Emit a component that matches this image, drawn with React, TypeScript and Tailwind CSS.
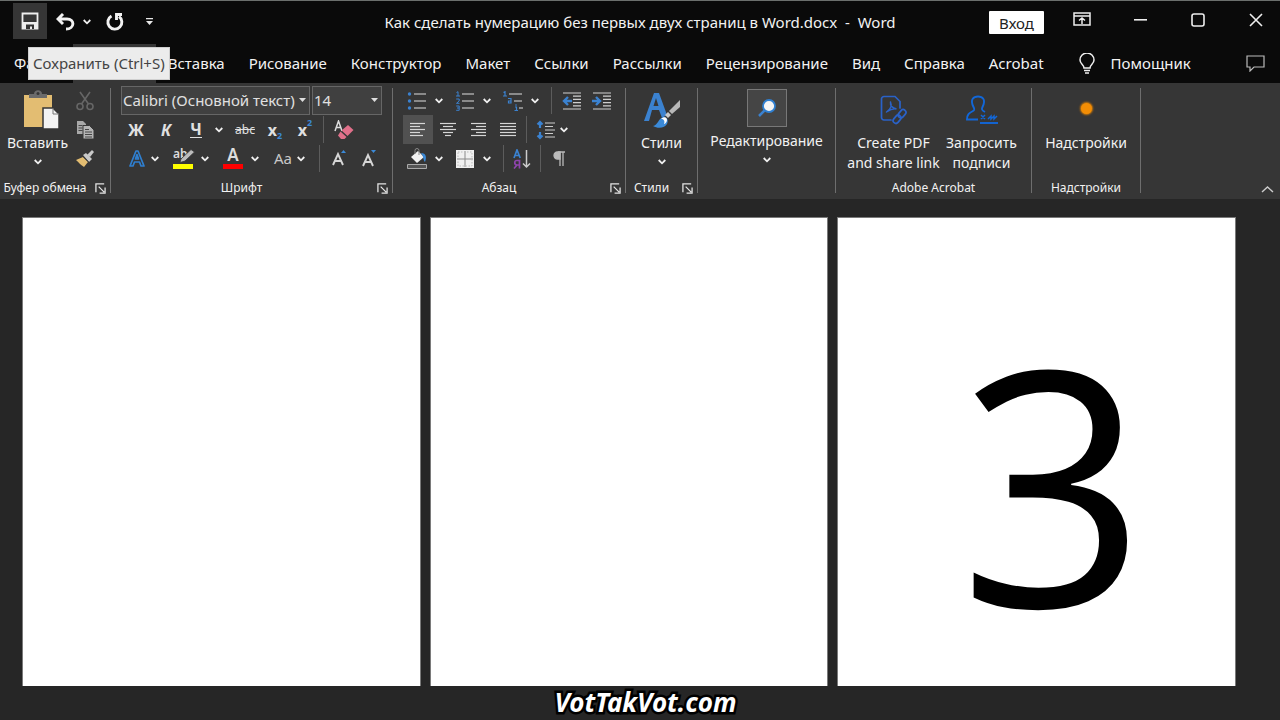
import { useState } from "react";
import type { ReactNode } from "react";

const TABS = [
  "Главная", "Вставка", "Рисование", "Конструктор", "Макет", "Ссылки",
  "Рассылки", "Рецензирование", "Вид", "Справка", "Acrobat",
];
const FONTS = ["Calibri (Основной текст)", "Arial", "Times New Roman"];
const SIZES = ["12", "14", "16", "18"];

// ── small pieces ──
function Chevron() {
  return (
    <svg width="8" height="6" viewBox="0 0 8 6" className="shrink-0" fill="none" stroke="#f0f0f0" strokeWidth="1.8">
      <path d="M.7 1 4 4.3 7.3 1" />
    </svg>
  );
}

function Divider() {
  return <div className="mt-[5px] mb-[6px] w-px shrink-0 bg-[#6e6e6e]" />;
}

function Sep() {
  return <div className="h-[27px] w-px shrink-0 bg-[#5c5c5c]" />;
}

function Tool({ label, children, className = "w-5" }: { label: string; children: ReactNode; className?: string }) {
  return (
    <button type="button" aria-label={label} className={`flex h-[29px] shrink-0 items-center justify-center ${className}`}>
      {children}
    </button>
  );
}

function Split({ label, children, tight = false }: { label: string; children: ReactNode; tight?: boolean }) {
  return (
    <button type="button" aria-label={label} className={`flex h-[29px] shrink-0 items-center ${tight ? "gap-1" : "gap-2"}`}>
      <span className="flex w-5 justify-center">{children}</span>
      <Chevron />
    </button>
  );
}

function Group({ title, launcher = false, className, children }: { title: string; launcher?: boolean; className: string; children: ReactNode }) {
  return (
    <section aria-label={title || "Редактирование"} className={`flex shrink-0 flex-col justify-between ${className}`}>
      {children}
      <div className="flex h-[22px] items-center text-[12px]">
        <span className="flex-1 text-center whitespace-nowrap">{title}</span>
        {launcher && (
          <button type="button" aria-label={`Параметры: ${title}`} className="flex w-5 justify-center">
            <svg width="11" height="11" viewBox="0 0 12 12" fill="none" stroke="#e4e4e4" strokeWidth="1.4">
              <path d="M1 10V1h9M4 4l6 6M11 5v6H5" />
            </svg>
          </button>
        )}
      </div>
    </section>
  );
}

function BigButton({ icon, lines, menu = false, className }: { icon: ReactNode; lines: string[]; menu?: boolean; className: string }) {
  return (
    <button type="button" className={`flex shrink-0 flex-col items-center text-[14px] leading-5 whitespace-nowrap ${className}`}>
      <span className="flex h-[46px] items-center">{icon}</span>
      {lines.map(l => <span key={l}>{l}</span>)}
      {menu && <span className="flex h-[18px] items-center"><Chevron /></span>}
    </button>
  );
}

function Lines({ rows }: { rows: [number, number][] }) {
  return (
    <svg width="18" height="16" viewBox="0 0 18 16" stroke="#d6d6d6" strokeWidth="1.2">
      {rows.map(([a, b], i) => <path key={i} d={`M${a} ${1.5 + i * 3}H${b}`} />)}
    </svg>
  );
}

function IndentIcon({ arrow }: { arrow: string }) {
  return (
    <svg width="20" height="18" viewBox="0 0 20 18" fill="none">
      <path d="M1 1h18M11 4.200h8M11 7.400h8M11 10.600h8M11 13.800h8M1 17h18" stroke="#cfcfcf" strokeWidth="1.2" />
      <path d={arrow} stroke="#3b82d0" strokeWidth="2.4" />
    </svg>
  );
}

// ── ribbon groups ──
function Clipboard() {
  return (
    <Group title="Буфер обмена" launcher className="w-[110px]">
      <div className="flex">
        <BigButton
          className="w-[75px] pt-1"
          lines={["Вставить"]}
          menu
          icon={
            <svg width="42" height="40" viewBox="-6 0 42 40">
              <path d="M1 5h28v32H1z" fill="#e3bd72" />
              <path d="M6 8V4h5c0-5 8-5 8 0h5v4z" fill="#6b6b6b" />
              <circle cx="15" cy="3.500" r="1.500" fill="#363636" />
              <path d="M20 18h10l6 6v15H20z" fill="#f3f3f3" stroke="#363636" strokeWidth="1.500" />
              <path d="M30 18v6h6" fill="none" stroke="#777" />
            </svg>
          }
        />
        <div className="flex flex-col pt-[3px]">
          <Tool label="Вырезать">
            <svg width="18" height="20" viewBox="0 0 18 20" fill="none" stroke="#666" strokeWidth="1.600">
              <path d="M4 1l8.500 12M14 1 5.500 13" />
              <circle cx="4" cy="15.500" r="3" /><circle cx="14" cy="15.500" r="3" />
            </svg>
          </Tool>
          <Tool label="Копировать">
            <svg width="18" height="18" viewBox="0 0 18 18">
              <path d="M1 0h6l3 3v10H1z" fill="#a8a8a8" />
              <path d="M2.500 4.500h4M2.500 7h4M2.500 9.500h4" stroke="#454545" />
              <path d="M7 4.500h6.500L18 9v9H7z" fill="#b4b4b4" stroke="#363636" />
              <path d="M9 8.500h4M9 11h7M9 13.500h7M9 16h7" stroke="#454545" />
            </svg>
          </Tool>
          <Tool label="Формат по образцу">
            <svg width="18" height="18" viewBox="0 0 18 18">
              <path d="M0 10l7-3 5 5-4 5C5 15 3 13 0 10z" fill="#e3bd72" />
              <path d="M7 5l3-2 6 6-3 3z" fill="#c9c9c9" />
              <path d="M11 5l5-5 2 2-4 5z" fill="#c9c9c9" />
              <path d="M6.500 6l6 6" stroke="#363636" />
            </svg>
          </Tool>
        </div>
      </div>
    </Group>
  );
}

function Combo({ label, options, value, className }: { label: string; options: string[]; value: string; className: string }) {
  const [val, setVal] = useState(value);
  return (
    <div className={`relative h-[29px] ${className}`}>
      <select
        aria-label={label}
        value={val}
        onChange={e => setVal(e.target.value)}
        className="h-full w-full appearance-none border border-[#666] bg-[#404040] pl-px text-[15px] outline-none"
      >
        {options.map(o => <option key={o}>{o}</option>)}
      </select>
      <svg width="7" height="4" viewBox="0 0 7 4" className="pointer-events-none absolute top-3 right-1">
        <path d="M0 0h7L3.500 4z" fill="#ddd" />
      </svg>
    </div>
  );
}

function FontGroup() {
  return (
    <Group title="Шрифт" launcher className="w-[281px]">
      <div className="flex flex-col pt-[3px] pl-[10px] text-[#e0e0e0]">
        <div className="flex gap-[2px]">
          <Combo label="Шрифт" options={FONTS} value={FONTS[0]} className="w-[189px]" />
          <Combo label="Размер шрифта" options={SIZES} value="14" className="w-[70px]" />
        </div>
        <div className="flex items-center">
          <Tool label="Полужирный" className="w-[30px] text-[16px] font-bold">Ж</Tool>
          <Tool label="Курсив" className="w-[30px] text-[16px] font-bold italic">К</Tool>
          <Tool label="Подчёркнутый" className="w-[30px] text-[16px] leading-4 font-bold"><span className="border-b border-[#e0e0e0]">Ч</span></Tool>
          <Tool label="Вид подчёркивания" className="w-4"><Chevron /></Tool>
          <Tool label="Зачёркнутый" className="w-9 text-[12px] line-through">abc</Tool>
          <Tool label="Подстрочный" className="w-6 text-[16px] font-bold">
            x<sub className="pt-2 text-[9px] text-[#3b8ad8]">2</sub>
          </Tool>
          <Tool label="Надстрочный" className="w-9 text-[16px] font-bold">
            x<sup className="pb-1 text-[9px] text-[#3b8ad8]">2</sup>
          </Tool>
          <Sep />
          <Tool label="Очистить формат" className="w-10">
            <svg width="20" height="20" viewBox="0 0 20 20" fill="none">
              <path d="M1 11 4.500 1 8 11M2.500 7.500h4" stroke="#ddd" strokeWidth="1.500" />
              <path d="M14 5l5.500 5-6 6-6-5.500z" fill="#e0708a" />
              <path d="M6.500 11.500l6 5.500-2 2H7l-3-3.500z" fill="#e0708a" />
            </svg>
          </Tool>
        </div>
        <div className="flex items-center gap-[14px] pl-[6px]">
          <Split label="Текстовые эффекты" tight>
            <svg width="18" height="19" viewBox="0 0 18 19" fill="none" strokeLinejoin="round">
              <path d="M2 17 8 2h2l6 15h-3l-1.500-4h-5L5 17zM7.500 10h3L9 5.500z" stroke="#2f7fd0" strokeWidth="1.700" />
            </svg>
          </Split>
          <Split label="Цвет выделения">
            <svg width="20" height="22" viewBox="0 0 20 22" className="overflow-visible">
              <text x="0" y="10" fontSize="12" fontWeight="600" fill="#ddd">ab</text>
              <path d="M8 11 18 1.500l3.500 2.500L12 13l-5 1.500z" fill="#bdbdbd" stroke="#363636" strokeWidth=".8" />
              <path d="M0 16h20v5H0z" fill="#ffff00" />
            </svg>
          </Split>
          <Split label="Цвет текста">
            <svg width="20" height="22" viewBox="0 0 20 22" className="overflow-visible">
              <text x="10" y="13" fontSize="17" fontWeight="600" textAnchor="middle" fill="#ddd">A</text>
              <path d="M0 16h20v5H0z" fill="#f00" />
            </svg>
          </Split>
          <Split label="Регистр" tight><span className="text-[15px] text-[#c8c8c8]">Aa</span></Split>
          <div className="flex items-center gap-[10px]">
            <Sep />
            <Tool label="Увеличить размер">
              <svg width="18" height="20" viewBox="0 0 18 20" fill="none">
                <path d="M2 16 7 5l5 11M4 12h6" stroke="#d6d6d6" strokeWidth="1.900" />
                <path d="M10 4l2.500-3L15 4z" fill="#3b8ad8" />
              </svg>
            </Tool>
            <Tool label="Уменьшить размер">
              <svg width="18" height="20" viewBox="0 0 18 20" fill="none">
                <path d="M2 17 7 6l5 11M4 13h6" stroke="#d6d6d6" strokeWidth="1.900" />
                <path d="M10 1l2.500 3L15 1z" fill="#3b8ad8" />
              </svg>
            </Tool>
          </div>
        </div>
      </div>
    </Group>
  );
}

function ParagraphGroup() {
  const [align, setAlign] = useState(0);
  const aligns: { label: string; rows: [number, number][] }[] = [
    { label: "По левому краю", rows: [[1, 16], [1, 11], [1, 16], [1, 11], [1, 14]] },
    { label: "По центру", rows: [[1, 17], [4, 14], [1, 17], [4, 14], [6, 12]] },
    { label: "По правому краю", rows: [[2, 17], [7, 17], [2, 17], [7, 17], [2, 17]] },
    { label: "По ширине", rows: [[1, 17], [1, 17], [1, 17], [1, 17], [1, 17]] },
  ];
  return (
    <Group title="Абзац" launcher className="w-[232px]">
      <div className="flex flex-col pt-[3px] pl-[10px]">
        <div className="flex items-center gap-3 pl-1">
          <Split label="Маркеры">
            <svg width="20" height="18" viewBox="0 0 20 18">
              <path d="M7 2h12M7 9h12M7 16h12" stroke="#ddd" strokeWidth="1.200" />
              <g fill="#3b82d0"><circle cx="2.500" cy="2" r="1.700" /><circle cx="2.500" cy="9" r="1.700" /><circle cx="2.500" cy="16" r="1.700" /></g>
            </svg>
          </Split>
          <Split label="Нумерация">
            <svg width="20" height="20" viewBox="0 0 20 20" fill="none">
              <path d="M7 3h12M7 10h12M7 17h12" stroke="#ddd" strokeWidth="1.200" />
              <path d="M1.500 1.500 3 .7v4.300M1 5h4M1.200 8h3v2L1.500 12.300h3M1.200 15h3v4.300h-3M2 17h2" stroke="#3b82d0" />
            </svg>
          </Split>
          <Split label="Многоуровневый список">
            <svg width="20" height="20" viewBox="0 0 20 20" fill="none">
              <path d="M6 3h13M11 10h8M16 17h4" stroke="#ddd" strokeWidth="1.200" />
              <path d="M.5 1.500 2 .7v4.300M0 5h4M5 7.500h3v4.500H5.500V10H8M12 16h1.500v3.500M11.500 19.500h3.500M13 13.300v1.400" stroke="#3b82d0" strokeWidth="1.200" />
            </svg>
          </Split>
          <div className="flex items-center gap-[10px]">
            <Sep />
            <Tool label="Уменьшить отступ"><IndentIcon arrow="M10 9H2M6 5 2 9l4 4" /></Tool>
            <Tool label="Увеличить отступ"><IndentIcon arrow="M0 9h8M4 5l4 4-4 4" /></Tool>
          </div>
        </div>
        <div className="flex items-center">
          {aligns.map((a, i) => (
            <button
              key={a.label}
              type="button"
              aria-label={a.label}
              aria-pressed={i === align}
              onClick={() => setAlign(i)}
              className={`flex h-[29px] w-[30px] items-center justify-center ${i === align ? "bg-[#515151]" : ""}`}
            >
              <Lines rows={a.rows} />
            </button>
          ))}
          <div className="flex items-center gap-[9px] pl-[3px]">
            <Sep />
            <Split label="Интервал" tight>
              <svg width="20" height="20" viewBox="0 0 20 20" fill="none">
                <path d="M4 2v6M1.500 4.500 4 2l2.500 2.500M4 18v-6M1.500 15.500 4 18l2.500-2.500" stroke="#3b82d0" strokeWidth="2.200" />
                <path d="M9 3h10M9 6.500h8M9 10h10M9 13.500h8M9 17h10" stroke="#ccc" strokeWidth="1.200" />
              </svg>
            </Split>
          </div>
        </div>
        <div className="flex items-center gap-3 pl-1">
          <Split label="Заливка">
            <svg width="20" height="22" viewBox="0 0 20 22">
              <path d="M4 9 11 3l6 6-7 6z" fill="#f2f2f2" />
              <path d="M8 6V2.500a2 2 0 0 1 4 0V7" fill="none" stroke="#888" />
              <path d="M14 5c5 0 6 4 4 9-2-2-1-5-4-9z" fill="#3b8ad8" />
              <path d="M.5 16.500h19v4H.5z" fill="#555" stroke="#aaa" />
            </svg>
          </Split>
          <Split label="Границы">
            <svg width="18" height="18" viewBox="0 0 18 18">
              <path d="M0 0h18v18H0z" fill="#f0f0f0" />
              <path d="M9 1v16M1 9h16" stroke="#8a8a8a" />
              <path d="M2 2h14v14H2z" fill="none" stroke="#bbb" strokeDasharray="1.500 1.500" />
            </svg>
          </Split>
          <div className="flex items-center gap-2">
            <Sep />
            <Tool label="Сортировка">
              <svg width="18" height="20" viewBox="0 0 18 20" fill="none" strokeWidth="1.700">
                <path d="M1 9 4 1l3.200 8M2 6.500h4" stroke="#3b82d0" />
                <path d="M6.500 19.500v-8H4c-3 0-3 4.500 0 4.500h2.500M4 16l-3 3.500" stroke="#8e44ad" />
                <path d="M13.500 1v17M10 14.500l3.500 3.500 3.500-3.500" stroke="#ccc" strokeWidth="1.500" />
              </svg>
            </Tool>
            <Sep />
            <Tool label="Отобразить все знаки">
              <svg width="12" height="16" viewBox="0 0 12 16" fill="none" stroke="#bbb" strokeWidth="1.300">
                <path d="M12 1H5M7 1v14M10 1v14" /><path d="M7 1H4.500a3.500 3.500 0 0 0 0 7H7z" fill="#bbb" />
              </svg>
            </Tool>
          </div>
        </div>
      </div>
    </Group>
  );
}

function Ribbon() {
  return (
    <div className="flex h-[116px] shrink-0 bg-[#363636] text-[#f2f2f2]">
      <Clipboard />
      <Divider />
      <FontGroup />
      <Divider />
      <ParagraphGroup />
      <Divider />
      <Group title="Стили" launcher className="w-[71px]">
        <BigButton
          className="pt-1"
          lines={["Стили"]}
          menu
          icon={
            <svg width="38" height="38" viewBox="0 0 38 38">
              <path d="M1 30 11 2h5l8 22-5 3-3-8H9L6 30zM10.500 15h5L13 7z" fill="#3b82d0" />
              <path d="M37 9v7l-8 7-3-3z" fill="#b8b8b8" />
              <path d="M25 21l3 3-3 3-3-3z" fill="#c8c8c8" />
              <path d="M10 35c5-1 5-7 10-9 4 0 6 3 4 7-2 4-9 5-14 2z" fill="#3b8ad8" />
              <path d="M18 28c3-3 6-2 6 1 0 2-2 4-3 4 1-3 0-5-3-5z" fill="#fff" />
            </svg>
          }
        />
      </Group>
      <Divider />
      <Group title="" className="w-[137px]">
        <BigButton
          className="pt-0.5"
          lines={["Редактирование"]}
          menu
          icon={
            <span className="flex h-[38px] w-10 items-center justify-center border border-[#787878] bg-[#454545]">
              <svg width="20" height="20" viewBox="0 0 20 20">
                <path d="M2 18l7-7" stroke="#3b82d0" strokeWidth="2.500" />
                <circle cx="12" cy="8" r="6" fill="#f4f4f4" stroke="#2f7fd0" strokeWidth="1.800" />
              </svg>
            </span>
          }
        />
      </Group>
      <Divider />
      <Group title="Adobe Acrobat" className="w-[195px]">
        <div className="flex justify-center">
          <BigButton
            className="w-[96px] pt-1"
            lines={["Create PDF", "and share link"]}
            icon={
              <svg width="28" height="30" viewBox="0 0 28 30" fill="none" stroke="#2a62c8" strokeWidth="1.700" strokeLinecap="round">
                <path d="M11 25H4a2.500 2.500 0 0 1-2.500-2.500V4A2.500 2.500 0 0 1 4 1.500h11l5 5V13" />
                <path d="M10.500 7c2 4-1 8-4 10M10.500 7c-.5 4 2 6 6 7-4-1-7 1-10 3" strokeWidth="1.500" />
                <rect x="17.500" y="16" width="9" height="5.500" rx="2.700" transform="rotate(-50 22 18.700)" />
                <rect x="12.500" y="21.500" width="9" height="5.500" rx="2.700" transform="rotate(-50 17 24.200)" />
              </svg>
            }
          />
          <BigButton
            className="w-[80px] pt-1"
            lines={["Запросить", "подписи"]}
            icon={
              <svg width="34" height="30" viewBox="0 0 34 30" fill="none" stroke="#1267d8" strokeWidth="1.900">
                <path d="M13 24.500H2c0-5 2-6.500 6-8.500 2-1 1.500-2 .5-4-4-8 .5-10.500 4.500-10.500S21.500 4 17.500 12c-1 2-1 3 2.500 5" />
                <path d="M16 20l4 4M20 20l-4 4M23 24l3-3v3l3-3v3l3-3" strokeWidth="1.500" />
                <path d="M15 28h18" />
              </svg>
            }
          />
        </div>
      </Group>
      <Divider />
      <Group title="Надстройки" className="w-[108px]">
        <BigButton
          className="pt-1"
          lines={["Надстройки"]}
          icon={<span className="mb-1 h-[11px] w-[11px] rounded-full bg-[#f28d05] shadow-[0_0_2px_1px_#d07a08]" />}
        />
      </Group>
      <Divider />
      <button type="button" aria-label="Свернуть ленту" className="mt-auto mr-1.5 mb-1.5 ml-auto">
        <svg width="13" height="7" viewBox="0 0 13 7" fill="none" stroke="#ccc" strokeWidth="1.400"><path d="M1 6l5.500-5L12 6" /></svg>
      </button>
    </div>
  );
}

// ── title bar ──
function TitleBar() {
  return (
    <header className="grid h-11 shrink-0 grid-cols-[1fr_auto_1fr] items-center border-t border-[#6b6f6d]">
      <div className="flex items-center pl-[13px]">
        <button type="button" aria-label="Сохранить" className="mb-1 flex h-9 w-[34px] items-center justify-center bg-[#363636]">
          <svg width="18" height="18" viewBox="0 0 18 18">
            <path d="M1.500 1.500h15v15h-15z" fill="none" stroke="#eee" strokeWidth="1.800" />
            <path d="M2 10h14v7H2z" fill="#eee" />
            <path d="M5 12.500h8V17h-2v-2.500H9V17H5z" fill="#333" />
          </svg>
        </button>
        <div className="mb-0.5 flex items-center pl-[9px]">
          <button type="button" aria-label="Отменить" className="flex items-center gap-2">
            <svg width="19" height="18" viewBox="0 0 19 18" fill="none" stroke="#f2f2f2" strokeWidth="2.900">
              <path d="M7 1 2 6l5 5M2 6h9c8 0 8 10-1 10" />
            </svg>
            <Chevron />
          </button>
          <button type="button" aria-label="Повторить" className="ml-3.5">
            <svg width="19" height="20" viewBox="0 0 19 20" fill="none" stroke="#f2f2f2" strokeWidth="2.900">
              <path d="M6.500 4a7 7 0 1 0 7.500.5" /><path d="M17 2.500h-5.500V8" />
            </svg>
          </button>
          <button type="button" aria-label="Настройка панели" className="ml-[22px]">
            <svg width="7" height="8" viewBox="0 0 7 8" fill="#e8e8e8"><path d="M0 0h7v1.200H0zM0 3h7L3.500 7z" /></svg>
          </button>
        </div>
      </div>
      <h1 className="text-[15px] whitespace-pre">Как сделать нумерацию без первых двух страниц в Word.docx  -  Word</h1>
      <div className="-mr-[5px] flex items-center justify-end">
        <button type="button" className="mr-[9px] h-[23px] w-[55px] rounded-[1px] bg-white text-[15px] leading-5 text-[#222]">Вход</button>
        <div className="mb-1.5 flex">
          <button type="button" aria-label="Параметры ленты" className="flex w-[58px] items-center justify-center">
            <svg width="18" height="15" viewBox="0 0 18 15" fill="none" stroke="#eee" strokeWidth="1.500">
              <path d="M1 1h16v12H1zM1 4h16M9 12V6M6 8.500 9 6l3 2.500" />
            </svg>
          </button>
          <button type="button" aria-label="Свернуть" className="flex w-[58px] items-center justify-center">
            <svg width="13" height="2" viewBox="0 0 13 2"><path d="M0 0h13v1.600H0z" fill="#eee" /></svg>
          </button>
          <button type="button" aria-label="Развернуть" className="flex w-[58px] items-center justify-center">
            <svg width="14" height="14" viewBox="0 0 14 14" fill="none" stroke="#eee" strokeWidth="1.600"><rect x="1" y="1" width="12" height="12" rx="2" /></svg>
          </button>
          <button type="button" aria-label="Закрыть" className="flex w-[58px] items-center justify-center">
            <svg width="14" height="14" viewBox="0 0 14 14" stroke="#eee" strokeWidth="1.600"><path d="M1 1l12 12M13 1 1 13" /></svg>
          </button>
        </div>
      </div>
    </header>
  );
}

function TabBar() {
  const [active, setActive] = useState("Главная");
  return (
    <nav className="relative flex h-[39px] shrink-0 items-center text-[15px]">
      <button type="button" className="mr-2 h-full pr-3 pl-[14px]">Файл</button>
      {TABS.map(t => (
        <button
          key={t}
          type="button"
          onClick={() => setActive(t)}
          className={`h-full px-3 whitespace-nowrap ${t === active ? "bg-[#363636]" : ""}`}
        >
          {t}
        </button>
      ))}
      <button type="button" className="ml-[23px] flex items-center gap-4">
        <svg width="16" height="21" viewBox="0 0 16 21" fill="none" stroke="#eee" strokeWidth="1.500">
          <path d="M5 15c0-3-4-4-4-8a7 7 0 0 1 14 0c0 4-4 5-4 8zM5 17.500h6M6 20h4" />
        </svg>
        Помощник
      </button>
      <button type="button" aria-label="Примечания" className="mr-[15px] ml-auto">
        <svg width="19" height="17" viewBox="0 0 19 17" fill="none" stroke="#bbb" strokeWidth="1.200"><path d="M1 1h17v11H8l-4 4v-4H1z" /></svg>
      </button>
      <div role="tooltip" className="absolute top-[3px] left-7 flex h-[33px] items-center border border-[#d0d0d0] bg-[#ececec] px-1 text-[15px] whitespace-nowrap text-[#444]">
        Сохранить (Ctrl+S)
      </div>
    </nav>
  );
}

function Page({ children }: { children?: ReactNode }) {
  return <article className="h-[560px] flex-1 border border-[#7a7a7a] bg-white text-black">{children}</article>;
}

export default function App() {
  return (
    <div className="flex h-screen flex-col overflow-hidden bg-[#0a0a0a] font-['Noto_Sans','Open_Sans',sans-serif] text-[#f2f2f2]">
      <TitleBar />
      <TabBar />
      <Ribbon />
      <main className="flex min-h-0 flex-1 gap-[9px] overflow-hidden bg-[#262626] pt-[18px] pr-11 pl-[22px]">
        <Page />
        <Page />
        <Page>
          <p className="pt-[98px] pl-8 text-center font-['Open_Sans',sans-serif] text-[328px] leading-[328px] font-medium">3</p>
        </Page>
      </main>
      <footer className="flex h-[34px] shrink-0 justify-center bg-[#262626] pl-[11px]">
        <span className="text-[26px] leading-[32px] font-bold text-white italic [paint-order:stroke_fill] [-webkit-text-stroke:5px_black]">VotTakVot.com</span>
      </footer>
    </div>
  );
}
